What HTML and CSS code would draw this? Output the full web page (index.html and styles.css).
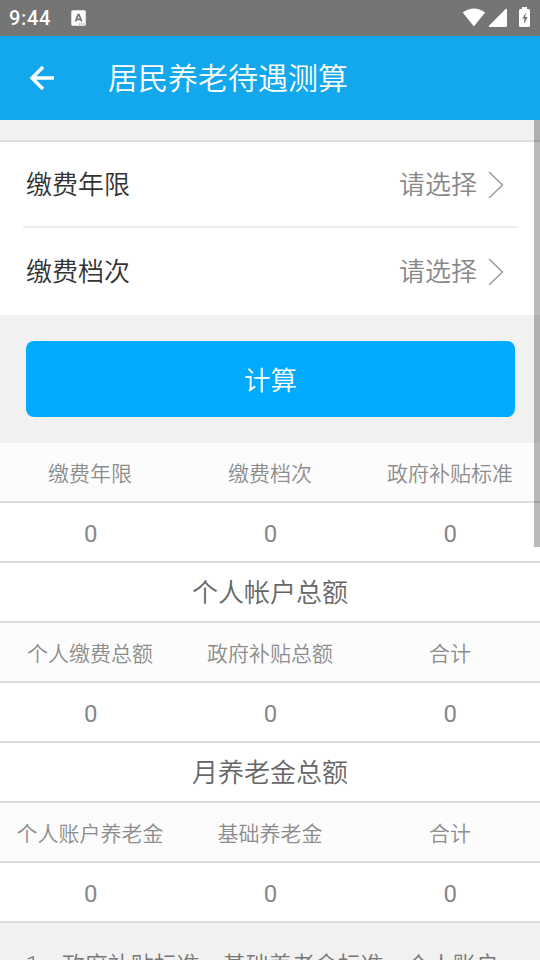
FILE: index.html
```html
<!DOCTYPE html>
<html lang="zh-CN">
<head>
<meta charset="utf-8">
<title>居民养老待遇测算</title>
<link rel="stylesheet" href="styles.css">
</head>
<body>
<div class="status">
  <span class="time">9:44</span>
  <svg class="notice" width="16" height="16" viewBox="0 0 16 16"><rect x=".3" y=".3" width="14.500" height="15.400" rx="1.500" fill="#fff"/><path d="M4.500 11.500 7.200 4.500h.8l2.700 7M5.500 9.300h4.200" fill="none" stroke="#757575" stroke-width="1.700"/><path d="M8 14h1.200m1 0h1.200m1 0h1.200" stroke="#757575" stroke-width="1.200"/></svg>
  <svg class="system" width="68" height="24" viewBox="0 0 68 24"><g fill="#fff"><path d="M.7 6.500Q11.900-1.500 23.100 6.500L12.700 19.500Q11.900 20.500 11.100 19.500Z"/><path d="M44 2.800q1 0 1 1V20q0 1-1 1H28q-2 0-.7-1.500L43.300 3.200Q43.600 2.800 44 2.800Z"/><path d="M58.500 3h1.500V1h5v2h1.500q1.500 0 1.500 1.500v15q0 1.500-1.500 1.500h-8q-1.500 0-1.500-1.500v-15Q57 3 58.500 3Z"/></g><path d="m64 6-3.500 6.500H62.300V18l3.200-7h-2.300Z" fill="#757575"/></svg>
</div>
<header class="bar">
  <svg class="back" width="26" height="26" viewBox="0 0 26 26"><path d="M25 13H4M14 2 3 13l11 11" fill="none" stroke="#fff" stroke-width="3.400"/></svg>
  <h1>居民养老待遇测算</h1>
</header>
<main class="page">
  <section class="form">
    <div class="field"><span>缴费年限</span><span class="value">请选择</span><svg width="16" height="28" viewBox="0 0 16 28"><path d="m1 2 13.500 13L1 28" fill="none" stroke="#999" stroke-width="1.400"/></svg></div>
    <div class="field"><span>缴费档次</span><span class="value">请选择</span><svg width="16" height="28" viewBox="0 0 16 28"><path d="m1 2 13.500 13L1 28" fill="none" stroke="#999" stroke-width="1.400"/></svg></div>
  </section>
  <button class="submit">计算</button>
  <section class="results">
    <div class="row head"><span>缴费年限</span><span>缴费档次</span><span>政府补贴标准</span></div>
    <div class="row num"><span>0</span><span>0</span><span>0</span></div>
    <div class="row title"><span>个人帐户总额</span></div>
    <div class="row head"><span>个人缴费总额</span><span>政府补贴总额</span><span>合计</span></div>
    <div class="row num"><span>0</span><span>0</span><span>0</span></div>
    <div class="row title"><span>月养老金总额</span></div>
    <div class="row head"><span>个人账户养老金</span><span>基础养老金</span><span>合计</span></div>
    <div class="row num"><span>0</span><span>0</span><span>0</span></div>
  </section>
  <p class="note"><span class="mark">1、</span>政府补贴标准、基础养老金标准、个人账户</p>
  <div class="scroll"></div>
</main>
</body>
</html>
```
FILE: styles.css
```css
* { box-sizing: border-box; }
html, body { height: 100%; overflow: hidden; }
body {
  margin: 0;
  display: flex;
  flex-direction: column;
  background: #f1f1f1;
  font-family: Roboto, "Noto Sans CJK SC", sans-serif;
  font-weight: 350;
  color: #333;
}
svg { display: block; flex: none; }
.status {
  flex: none;
  height: 36px;
  display: flex;
  align-items: center;
  padding: 0 10px 0 9px;
  background: #757575;
  color: #fff;
}
.time { font-size: 20px; font-weight: 500; letter-spacing: .7px; }
.notice { margin-left: 20px; }
.system { margin-left: auto; }
.bar {
  flex: none;
  height: 84px;
  display: flex;
  align-items: center;
  padding-left: 29px;
  background: #13a8ee;
  color: #fff;
}
.bar h1 { margin: 0 0 0 53px; padding-top: 2px; font-size: 30px; line-height: 44px; font-weight: 350; }
.page { position: relative; flex: 1; min-height: 0; overflow: hidden; padding-top: 20px; }
.form { height: 175px; background: #fff; border-top: 2px solid #ddd; }
.field {
  height: 87px;
  margin: 0 22px 0 23px;
  padding: 0 14px 2px 3px;
  display: flex;
  align-items: center;
  font-size: 26px;
}
.field:first-child { height: 86px; border-bottom: 2px solid #eee; padding-bottom: 0; }
.field span { padding-bottom: 3px; }
.field:first-child span { padding-bottom: 4px; }
.value { margin-left: auto; margin-right: 11px; color: #888; }
.submit {
  display: block;
  width: 489px;
  height: 76px;
  margin: 26px 0 26px 26px;
  padding: 0 0 2px;
  border: 0;
  border-radius: 8px;
  background: #00aaff;
  color: #fff;
  font: inherit;
  font-size: 26.5px;
}
.row {
  height: 60px;
  display: flex;
  align-items: center;
  border-bottom: 2px solid #ddd;
  background: #fff;
  text-align: center;
}
.row span { flex: 1 1 0; white-space: nowrap; }
.head { background: #fcfcfc; color: #8c8c8c; font-size: 21px; }
.num { color: #888; font-size: 24px; font-weight: 400; padding: 3px 0 0 1px; }
.title { color: #666; font-size: 26px; padding-bottom: 3px; }
.note { margin: 25px 0 0 26px; font-size: 23px; line-height: 36px; color: #777; white-space: nowrap; }
.scroll { position: absolute; top: 0; right: 0; width: 6px; height: 427px; background: rgba(0, 0, 0, .27); }
```
